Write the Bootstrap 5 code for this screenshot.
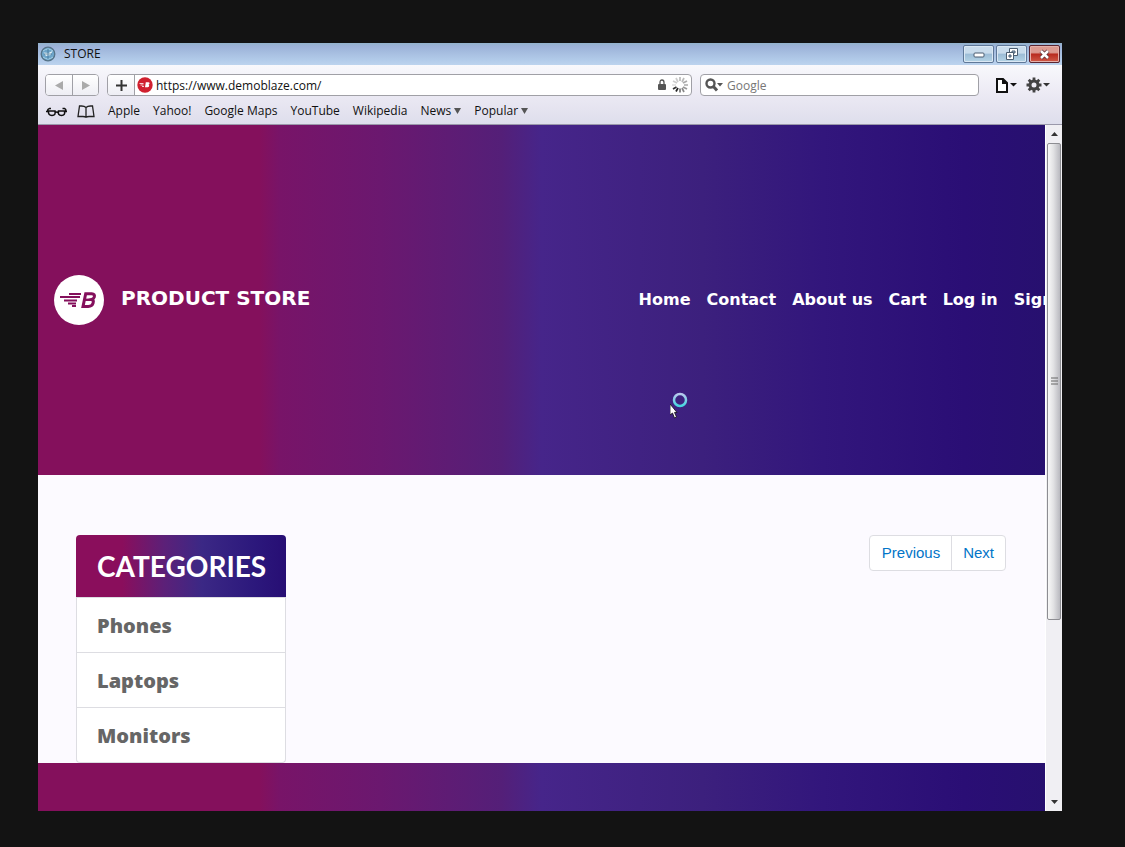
<!DOCTYPE html>
<html lang="en">
<head>
<meta charset="utf-8">
<meta name="viewport" content="width=device-width, initial-scale=1">
<title>STORE</title>
<link rel="stylesheet" href="https://cdn.jsdelivr.net/npm/bootstrap@5.3.0/dist/css/bootstrap.min.css">
<style>
  body { background: #131313; font-family: "Liberation Sans", Arial, sans-serif; }
  .desktop { min-height: 100vh; padding: 43px 63px 36px 38px; }
  .app-window { background: #fcfaff; }
  .chrome-text, .chrome-text input { font: 12px/16px "Open Sans", "Noto Sans", sans-serif; color: #111; }
  .titlebar { height: 22px; background: linear-gradient(#93b3cc 0, #9cb2d8 15%, #b3ccea 80%, #bcd3ee); padding: 0 2px; }
  .win-buttons { gap: 2px; }
  .win-btn { width: 31px; height: 18px; border: 1px solid #5f7898; border-radius: 2px; background: linear-gradient(#c9dcec 45%, #9cbcd6 50%, #b4d4e6); box-shadow: inset 0 0 0 1px #dbe8f4; }
  .win-close { border-color: #5b2530; background: linear-gradient(#dc9a91 40%, #b92c20 52%, #d05a48); box-shadow: inset 0 0 0 1px #e5b0aa; }
  .toolbars { background: linear-gradient(#f8f8fc, #e9e7f2 60%, #dedeec); border-bottom: 1px solid #9a98aa; height: 60px; padding: 9px 11px 0 7px; }
  .tool { border: 1px solid #a0a0a6; border-radius: 4px; height: 22px; background: #fff; overflow: hidden; }
  .tool-btn { border: 0; background: linear-gradient(#fff, #eeeef4); width: 26px; }
  .tool-btn + .tool-btn, .tool-btn + .address { border-left: 1px solid #a0a0a6; }
  .address { padding-right: 3px; }
  .lock { margin-right: 6px; }
  .search-box { width: 279px; padding: 0 4px; }
  .tool input { border: 0; outline: 0; min-width: 0; padding: 1px 0 0; background: transparent; }
  .tool input::placeholder { color: #777; opacity: 1; }
  .plain { border: 0; background: none; padding: 0; }
  .marks { gap: 13px; height: 28px; padding: 2px 0 0 1px; }
  .marks a, .marks button { color: #111; text-decoration: none; }
  .mark-icons { gap: 9px; }
  .band { background: linear-gradient(90deg, #84105c 0, #84105c 22%, #781468 24%, #6b186f 34%, #541f78 46%, #46258a 50%, #3c207d 66%, #32167c 78%, #2a0e75 92%, #27106f); }
  .hero { height: 350px; }
  .hero-row { width: calc(100% + 37px); padding-left: 16px; }
  .brand-text { font: 700 20px/30px "DejaVu Sans", sans-serif; color: #fff; text-decoration: none; gap: 17px; }
  .main-links { gap: 16px; }
  .main-links a { font: 700 16px/24px "DejaVu Sans", sans-serif; color: #fff; text-decoration: none; white-space: nowrap; }
  .busy-cursor { left: 632px; top: 267px; }
  .content-area { padding: 60px 39px 0 38px; }
  .categories { width: 210px; border-radius: 4px; }
  .categories .list-group-item { font: 800 20px/56px "Open Sans", sans-serif; color: #666; padding: 0 20px; border-color: #dddde2; background: #fff; height: 55px; }
  .categories .cat-head { font: 700 28px/63px Lato, sans-serif; height: 62px; color: #fff; border: 0; padding: 0 21px; background: linear-gradient(90deg, #8a0e5c 0, #8a0e5c 22%, #5c2078 42%, #3b2885 60%, #2c187c 85%, #270e74); }
  .categories .cat-head + .list-group-item { border-top-width: 1px; height: 56px; }
  .pagination .page-link { font-size: 15px; line-height: 22px; padding: 6px 11px; color: #0275c8; border-color: #dddde2; background: #fff; }
  .pagination .page-item:first-child .page-link { padding-left: 12px; border-radius: 4px 0 0 4px; }
  .pagination .page-item:last-child .page-link { border-radius: 0 4px 4px 0; }
  .foot { height: 48px; }
  .scrollbar-col { width: 17px; background: #f0eff3; border-left: 1px solid #fff; }
  .scrollbar-col button { height: 18px; }
  .thumb { height: calc(73% + 2px); width: 14px; border: 1px solid #8d8d92; border-radius: 2px; background: linear-gradient(90deg, #f8f8f8, #e2e2e4 45%, #b9b9bf); }
</style>
</head>
<body>
<div class="desktop d-flex">
<div class="app-window d-flex flex-column flex-grow-1 overflow-hidden">
  <header class="chrome-text">
    <div class="titlebar d-flex align-items-center">
      <svg width="16" height="16" viewBox="0 0 16 16" aria-hidden="true"><circle cx="8" cy="8" r="6.800" fill="#6ea5c9" stroke="#567388" stroke-width="1.300"/><path d="M3 5q5-4 10 0M3 11q5 4 10 0" stroke="#a5d1e8" fill="none"/><path d="M3.500 6.500l5 .5 4-2-2 4-4.500 1z" fill="#eef7fa"/><path d="M4 8h8M8 3v10" stroke="#386c91" stroke-width=".7"/></svg>
      <span class="ms-2">STORE</span>
      <div class="win-buttons d-flex ms-auto">
        <button class="win-btn p-0 d-flex align-items-center justify-content-center" aria-label="Minimize"><svg width="12" height="8"><rect x="1" y="3" width="10" height="4" rx="1" fill="#fff" stroke="#4b5d70"/></svg></button>
        <button class="win-btn p-0 d-flex align-items-center justify-content-center" aria-label="Restore"><svg width="13" height="12" fill="#fff" stroke="#4b5d70"><path d="M4.500.5h8v7h-8z"/><path d="M7 3h3v2H7z" fill="#a8c4da"/><path d="M1.500 4.500h7v7h-7z"/><path d="M4 7h2v2H4z" fill="#a8c4da"/></svg></button>
        <button class="win-btn win-close p-0 d-flex align-items-center justify-content-center" aria-label="Close"><svg width="13" height="11" fill="none"><path d="M3 2l7 7M10 2L3 9" stroke="#5d3038" stroke-width="4"/><path d="M3 2l7 7M10 2L3 9" stroke="#fff" stroke-width="2.500"/></svg></button>
      </div>
    </div>
    <div class="toolbars">
      <div class="d-flex align-items-center">
        <div class="tool d-flex me-2">
          <button class="tool-btn p-0 d-flex align-items-center justify-content-center" aria-label="Back"><svg width="10" height="9"><path d="M9 0v9L1 4.500z" fill="#aaa"/></svg></button>
          <button class="tool-btn p-0 d-flex align-items-center justify-content-center" aria-label="Forward"><svg width="10" height="9"><path d="M1 0v9l8-4.500z" fill="#aaa"/></svg></button>
        </div>
        <div class="tool d-flex flex-grow-1 me-2">
          <button class="tool-btn p-0 d-flex align-items-center justify-content-center" aria-label="Add bookmark"><svg width="11" height="11"><path d="M5.500 0v11M0 5.500h11" stroke="#333" stroke-width="2"/></svg></button>
          <div class="address d-flex align-items-center flex-grow-1">
            <svg class="flex-shrink-0" width="21" height="16" viewBox="-1 0 21 16" aria-hidden="true"><circle cx="9" cy="8" r="7.700" fill="#d0202f"/><path d="M3.500 6.500h4M4.500 8h3M6 9.500h2" stroke="#fff" stroke-width=".8"/><path d="M9.800 5.300h2.700q1.500.2 1 1.500-.3.700-1 .9 1 .4.600 1.500-.4 1-1.600 1H9z" fill="#fff"/></svg>
            <input class="flex-grow-1" type="text" aria-label="Address" value="https://www.demoblaze.com/">
            <svg class="lock" width="8" height="12" aria-hidden="true"><path d="M2 5V3.500q0-2.500 2-2.500t2 2.500V5" stroke="#555" stroke-width="1.300" fill="none"/><rect x="0" y="5" width="8" height="6" rx="1" fill="#555"/></svg>
            <svg width="16" height="16" viewBox="-8 -8 16 16" stroke-width="1.700" aria-hidden="true"><path d="M0 3.500v4" stroke="#777"/><path d="M-2 3l-2 3.500" stroke="#222"/><path d="M-3.500 2L-7 4" stroke="#333"/><path d="M-4 0h-4" stroke="#ddd"/><path d="M-3-2l-4-2" stroke="#ccc"/><path d="M-2-3l-2-4" stroke="#ccc"/><path d="M0-4v-4" stroke="#bbb"/><path d="M2-3l2-4" stroke="#bbb"/><path d="M3-2l4-2" stroke="#aaa"/><path d="M4 0h4" stroke="#aaa"/><path d="M3 2l4 2" stroke="#999"/><path d="M2 3l2 4" stroke="#888"/></svg>
          </div>
        </div>
        <div class="tool search-box d-flex align-items-center">
          <svg class="me-1" width="18" height="14" aria-hidden="true"><circle cx="5.500" cy="5.500" r="4" fill="none" stroke="#555" stroke-width="2.400"/><path d="M8 8l4 4.500" stroke="#555" stroke-width="3"/><path d="M12 5h6l-3 3.500z" fill="#555"/></svg>
          <input class="flex-grow-1" type="search" aria-label="Search" placeholder="Google">
        </div>
        <button class="plain d-flex ms-3" aria-label="Page menu"><svg width="23" height="16"><path d="M2 2h6l4 4v9H2z M8 2v4h4" fill="#fff" stroke="#111" stroke-width="2"/><path d="M15 6h7L18.500 9.500z" fill="#111"/></svg></button>
        <button class="plain d-flex ms-2" aria-label="Settings menu"><svg width="25" height="16"><circle cx="8" cy="8" r="4" fill="none" stroke="#444" stroke-width="3"/><path d="M8 .5v3M8 12.500v3M.5 8h3M12.500 8h3M2.700 2.700l2 2M11.300 11.300l2 2M2.700 13.300l2-2M11.300 4.700l2-2" stroke="#444" stroke-width="2.800"/><path d="M17 6h7L20.500 9.500z" fill="#333"/></svg></button>
      </div>
      <nav class="marks d-flex align-items-center" aria-label="Bookmarks">
        <div class="mark-icons d-flex align-items-center">
          <button class="plain d-flex" aria-label="Reading list"><svg width="22" height="12" fill="none" stroke="#111" stroke-width="1.600"><path d="M2.500 6h6.500q1 4.500-3 4.500T2.500 6zM12.500 6h6q1 4.500-3 4.500t-3-4.500zM9 7.500q1.500-1 3 0M0 6.500h3M18.500 6.500h2.500M16.500 3.500h2q1.500.5 1.500 2.500M5 3.500H3.500Q1.500 4 1.500 6"/></svg></button>
          <button class="plain d-flex" aria-label="All bookmarks"><svg width="18" height="13" fill="none" stroke="#222" stroke-width="1.300"><path d="M9 2.500Q7.500 1 4.500 1H2.500L1 11.500h5q2 0 3 .7 1-.7 3-.7h5L15.500 1h-2Q10.500 1 9 2.500v9.500"/></svg></button>
        </div>
        <a href="#">Apple</a><a href="#">Yahoo!</a><a href="#">Google Maps</a><a href="#">YouTube</a><a href="#">Wikipedia</a>
        <button class="plain">News <svg width="7" height="8"><path d="M0 0h7L3.500 6z" fill="#555"/></svg></button>
        <button class="plain">Popular <svg width="7" height="8"><path d="M0 0h7L3.500 6z" fill="#555"/></svg></button>
      </nav>
    </div>
  </header>
  <div class="d-flex flex-grow-1">
    <div class="d-flex flex-column flex-grow-1 overflow-hidden">
      <div class="band hero position-relative d-flex align-items-center overflow-hidden">
        <div class="hero-row d-flex align-items-center flex-shrink-0">
          <a class="brand-text d-flex align-items-center" href="#">
            <svg width="50" height="50" viewBox="0 0 50 50" aria-hidden="true"><circle cx="25" cy="25" r="25" fill="#fff"/><path d="M15 20h12M6 23h20M10 26.500h13M14 29.500h8M18 32h4" stroke="#84105c" stroke-width="1.800" transform="translate(0 -1)"/><path d="M31.700 18.800h6q3.600.2 2.600 3.200-.6 1.900-2.600 2.500 2.300.9 1.400 3.600-1 3.300-4.800 3.300h-5.300z" fill="none" stroke="#84105c" stroke-width="3"/><path d="M30.500 24.800h7" stroke="#84105c" stroke-width="2.400"/></svg>
            <span class="pb-1">PRODUCT STORE</span>
          </a>
          <nav class="main-links d-flex ms-auto" aria-label="Main">
            <a href="#">Home</a><a href="#">Contact</a><a href="#">About us</a><a href="#">Cart</a><a href="#">Log in</a><a href="#">Sign up</a>
          </nav>
        </div>
        <svg class="busy-cursor position-absolute" width="19" height="28" viewBox="0 0 19 28" aria-hidden="true"><defs><linearGradient id="ring" x2="0" y2="1"><stop stop-color="#b9c9ee"/><stop offset="1" stop-color="#45d5df"/></linearGradient></defs><circle cx="10" cy="8" r="6" fill="none" stroke="url(#ring)" stroke-width="2.500"/><path d="M0 12v11l2.500-2 2 5 2-1-2-4.500H7z" fill="#fff" stroke="#111" stroke-width=".8"/></svg>
      </div>
      <main class="content-area flex-grow-1 d-flex justify-content-between align-items-start">
        <div class="categories list-group">
          <a class="list-group-item cat-head" href="#">CATEGORIES</a>
          <a class="list-group-item" href="#">Phones</a>
          <a class="list-group-item" href="#">Laptops</a>
          <a class="list-group-item" href="#">Monitors</a>
        </div>
        <nav aria-label="Products">
          <ul class="pagination mb-0">
            <li class="page-item"><button class="page-link" type="button">Previous</button></li>
            <li class="page-item"><button class="page-link" type="button">Next</button></li>
          </ul>
        </nav>
      </main>
      <footer class="band foot"></footer>
    </div>
    <div class="scrollbar-col d-flex flex-column flex-shrink-0 align-items-center">
      <button class="plain d-flex align-items-center" aria-label="Scroll up"><svg width="7" height="4"><path d="M0 4h7L3.500 0z" fill="#333"/></svg></button>
      <div class="flex-grow-1 d-flex">
        <div class="thumb d-flex align-items-center justify-content-center"><svg width="7" height="8"><path d="M0 1h7M0 4h7M0 7h7" stroke="#666"/></svg></div>
      </div>
      <button class="plain d-flex align-items-center" aria-label="Scroll down"><svg width="7" height="4"><path d="M0 0h7L3.500 4z" fill="#333"/></svg></button>
    </div>
  </div>
</div>
</div>
<script src="https://cdn.jsdelivr.net/npm/bootstrap@5.3.0/dist/js/bootstrap.bundle.min.js"></script>
</body>
</html>
